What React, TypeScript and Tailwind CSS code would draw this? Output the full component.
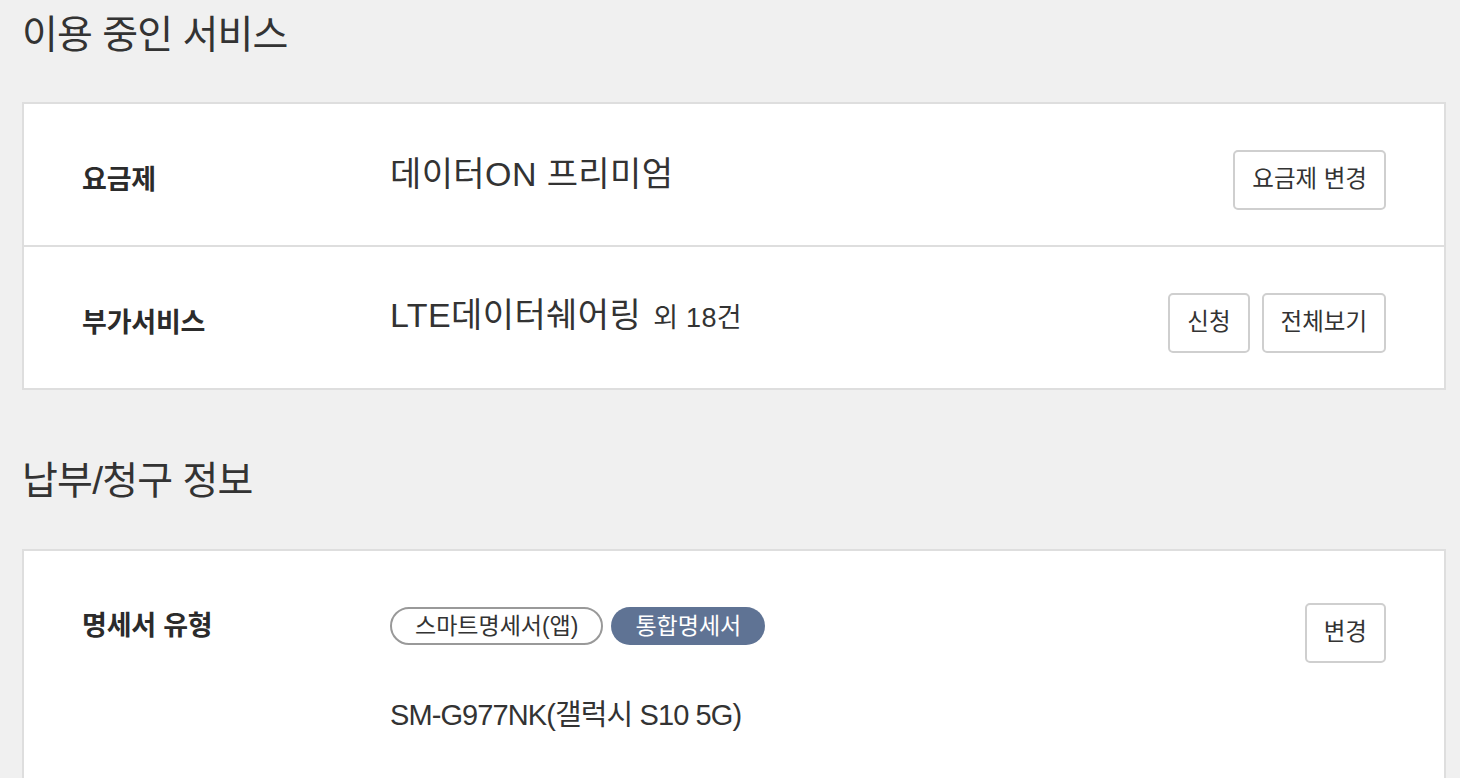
import React from 'react';

const FONT = '"Liberation Sans", "Noto Sans CJK KR", sans-serif';

function OutlineButton({ children }: { children: React.ReactNode }) {
  return (
    <button
      type="button"
      className="h-[60px] px-[17px] rounded-[5px] border-2 border-[#cfcfcf] bg-white text-[23.5px] text-[#333] leading-none"
    >
      {children}
    </button>
  );
}

function ServiceRow({
  label,
  children,
  actions,
  last,
}: {
  label: string;
  children: React.ReactNode;
  actions: React.ReactNode;
  last?: boolean;
}) {
  return (
    <div
      className={`flex items-center pl-[58px] pr-[58px] pt-[46px] pb-[35px] ${
        last ? '' : 'border-b-2 border-[#dedede]'
      }`}
    >
      <div className="w-[308px] text-[27px] font-bold tracking-[-0.2px] text-[#2b2b2b] leading-[32px]">
        {label}
      </div>
      <div className="flex-1 mb-[12px] flex items-baseline">{children}</div>
      <div className="flex gap-[12px]">{actions}</div>
    </div>
  );
}

export default function App() {
  return (
    <div
      className="min-h-screen bg-[#f0f0f0] pl-[22px] pr-[14px] pt-[10px] text-[#333]"
      style={{ fontFamily: FONT }}
    >
      {/* 이용 중인 서비스 */}
      <h2 className="text-[39px] tracking-[-0.8px] leading-[50px] text-[#333] font-normal">
        이용 중인 서비스
      </h2>
      <div className="mt-[42px] bg-white border-2 border-[#dedede]">
        <ServiceRow label="요금제" actions={<OutlineButton>요금제 변경</OutlineButton>}>
          <span className="text-[34px] tracking-[0.4px] leading-[40px]">데이터ON 프리미엄</span>
        </ServiceRow>
        <ServiceRow
          label="부가서비스"
          last
          actions={
            <>
              <OutlineButton>신청</OutlineButton>
              <OutlineButton>전체보기</OutlineButton>
            </>
          }
        >
          <span className="text-[34px] tracking-[0.4px] leading-[40px]">LTE데이터쉐어링</span>
          <span className="ml-[12px] text-[27px] tracking-[0.3px]">외 18건</span>
        </ServiceRow>
      </div>

      {/* 납부/청구 정보 */}
      <h2 className="mt-[66px] text-[39px] tracking-[-0.8px] leading-[50px] text-[#333] font-normal">
        납부/청구 정보
      </h2>
      <div className="mt-[43px] bg-white border-2 border-[#dedede] pb-[90px]">
        <div className="flex items-start pl-[58px] pr-[58px] pt-[52px]">
          <div className="w-[308px] mt-[8px] text-[27px] font-bold tracking-[-0.2px] text-[#2b2b2b] leading-[30px]">
            명세서 유형
          </div>
          <div className="flex-1 mt-[4px]">
            <div className="flex gap-[8px]">
              <span className="h-[38px] px-[23px] flex items-center rounded-full border-2 border-[#999] text-[23px] text-[#333]">
                스마트명세서(앱)
              </span>
              <span className="h-[38px] px-[24px] flex items-center rounded-full bg-[#5f7394] text-[23px] text-white">
                통합명세서
              </span>
            </div>
            <div className="mt-[54px] text-[29px] tracking-[-0.9px] leading-[32px]">
              SM-G977NK(갤럭시 S10 5G)
            </div>
          </div>
          <OutlineButton>변경</OutlineButton>
        </div>
      </div>
    </div>
  );
}
